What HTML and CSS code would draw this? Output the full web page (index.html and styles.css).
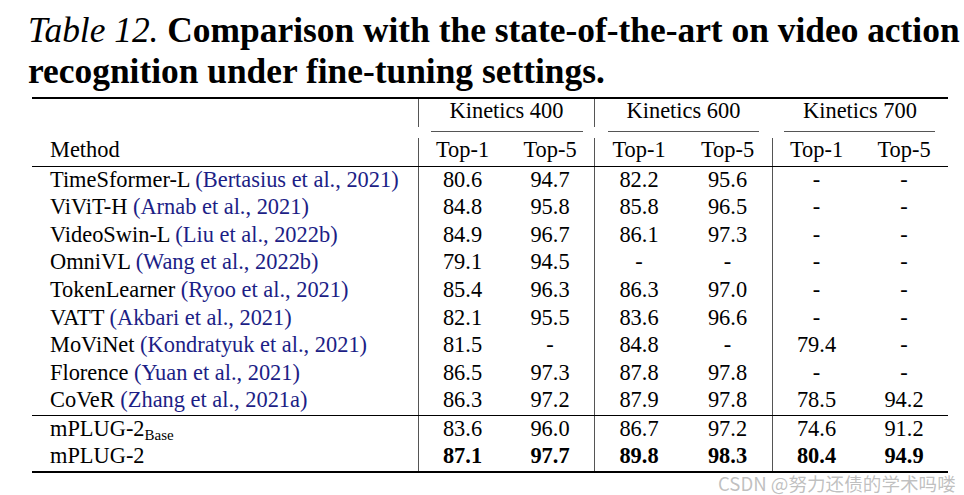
FILE: index.html
```html
<!DOCTYPE html>
<html>
<head>
<meta charset="utf-8">
<link rel="stylesheet" href="styles.css">
</head>
<body>
<div class="page">
  <p class="caption"><span class="label">Table 12.</span> <b>Comparison with the state-of-the-art on video action</b><br><b>recognition under fine-tuning settings.</b></p>
  <div class="tbl">
    <div class="rule thick"></div>

    <div class="c m"></div>
    <div class="c grp vl">Kinetics 400</div>
    <div class="c grp vl">Kinetics 600</div>
    <div class="c grp">Kinetics 700</div>

    <div class="c"></div>
    <div class="c grp cm"><span class="cmid k4"></span></div>
    <div class="c grp cm"><span class="cmid k6"></span></div>
    <div class="c grp cm"><span class="cmid k7"></span></div>

    <div class="c m hd">Method</div>
    <div class="c vl hd">Top-1</div><div class="c hd">Top-5</div>
    <div class="c vl hd">Top-1</div><div class="c hd">Top-5</div>
    <div class="c vl hd">Top-1</div><div class="c hd">Top-5</div>

    <div class="rule mid"></div>

    <div class="c m"><span>TimeSformer-L <span class="cite">(Bertasius et al., 2021)</span></span></div>
    <div class="c vl">80.6</div><div class="c">94.7</div><div class="c vl">82.2</div><div class="c">95.6</div><div class="c vl">-</div><div class="c">-</div>

    <div class="c m"><span>ViViT-H <span class="cite">(Arnab et al., 2021)</span></span></div>
    <div class="c vl">84.8</div><div class="c">95.8</div><div class="c vl">85.8</div><div class="c">96.5</div><div class="c vl">-</div><div class="c">-</div>

    <div class="c m"><span>VideoSwin-L <span class="cite">(Liu et al., 2022b)</span></span></div>
    <div class="c vl">84.9</div><div class="c">96.7</div><div class="c vl">86.1</div><div class="c">97.3</div><div class="c vl">-</div><div class="c">-</div>

    <div class="c m"><span>OmniVL <span class="cite">(Wang et al., 2022b)</span></span></div>
    <div class="c vl">79.1</div><div class="c">94.5</div><div class="c vl">-</div><div class="c">-</div><div class="c vl">-</div><div class="c">-</div>

    <div class="c m"><span>TokenLearner <span class="cite">(Ryoo et al., 2021)</span></span></div>
    <div class="c vl">85.4</div><div class="c">96.3</div><div class="c vl">86.3</div><div class="c">97.0</div><div class="c vl">-</div><div class="c">-</div>

    <div class="c m"><span>VATT <span class="cite">(Akbari et al., 2021)</span></span></div>
    <div class="c vl">82.1</div><div class="c">95.5</div><div class="c vl">83.6</div><div class="c">96.6</div><div class="c vl">-</div><div class="c">-</div>

    <div class="c m"><span>MoViNet <span class="cite">(Kondratyuk et al., 2021)</span></span></div>
    <div class="c vl">81.5</div><div class="c">-</div><div class="c vl">84.8</div><div class="c">-</div><div class="c vl">79.4</div><div class="c">-</div>

    <div class="c m"><span>Florence <span class="cite">(Yuan et al., 2021)</span></span></div>
    <div class="c vl">86.5</div><div class="c">97.3</div><div class="c vl">87.8</div><div class="c">97.8</div><div class="c vl">-</div><div class="c">-</div>

    <div class="c m"><span>CoVeR <span class="cite">(Zhang et al., 2021a)</span></span></div>
    <div class="c vl">86.3</div><div class="c">97.2</div><div class="c vl">87.9</div><div class="c">97.8</div><div class="c vl">78.5</div><div class="c">94.2</div>

    <div class="rule mid"></div>

    <div class="c m"><span>mPLUG-2<sub class="sub">Base</sub></span></div>
    <div class="c vl">83.6</div><div class="c">96.0</div><div class="c vl">86.7</div><div class="c">97.2</div><div class="c vl">74.6</div><div class="c">91.2</div>

    <div class="c m"><span>mPLUG-2</span></div>
    <div class="c vl b">87.1</div><div class="c b">97.7</div><div class="c vl b">89.8</div><div class="c b">98.3</div><div class="c vl b">80.4</div><div class="c b">94.9</div>

    <div class="rule thick"></div>
  </div>
  <div class="watermark">CSDN @努力还债的学术吗喽</div>
</div>
</body>
</html>
```
FILE: styles.css
```css
html, body {
  margin: 0;
  padding: 0;
  background: #ffffff;
}
.page {
  position: relative;
  width: 964px;
  height: 495px;
  overflow: hidden;
  font-family: "Liberation Serif", "Times New Roman", serif;
  color: #000;
}
.caption {
  margin: 0;
  padding: 10px 0 0 28px;
  height: 87px;
  font-size: 35.4px;
  line-height: 41px;
  white-space: nowrap;
}
.caption .label {
  font-style: italic;
}
.tbl {
  margin-left: 32px;
  width: 916px;
  display: grid;
  grid-template-columns: 386px 88px 88px 89px 89px 88px 88px;
  grid-template-rows: 2px 28px 11px 28px 1px repeat(9, 27.55px) 1px 27.5px 27.5px 2px;
  font-size: 22.4px;
  line-height: 22px;
}
.rule {
  grid-column: 1 / -1;
  background: #000;
}
.rule.thick { height: 2px; }
.rule.mid { height: 1px; }
.c {
  display: flex;
  align-items: center;
  justify-content: center;
  white-space: nowrap;
  padding-bottom: 2px;
}
.c.m {
  justify-content: flex-start;
  padding-left: 18px;
}
.c.vl {
  border-left: 1px solid #555;
}
.grp {
  grid-column: span 2;
  padding-bottom: 5px;
}
.cm {
  align-items: flex-start;
  justify-content: stretch;
  padding-bottom: 0;
}
.cmid {
  display: block;
  width: 100%;
  height: 1px;
  margin-top: 4px;
  background: #555;
}
.k4 { margin-left: 13px; margin-right: 11px; }
.k6 { margin-left: 14px; margin-right: 13px; }
.k7 { margin-left: 12px; margin-right: 13px; }
.hd {
  padding-bottom: 5px;
}
.cite {
  color: #1c1e86;
}
.sub {
  font-size: 15px;
  vertical-align: -4px;
  line-height: 0;
}
.b {
  font-weight: bold;
}
.watermark {
  position: absolute;
  left: 718px;
  top: 473px;
  font-family: "Noto Sans CJK SC", "Noto Sans", sans-serif;
  font-size: 18.6px;
  line-height: 19px;
  color: rgba(150, 150, 150, 0.6);
  white-space: nowrap;
}
```
